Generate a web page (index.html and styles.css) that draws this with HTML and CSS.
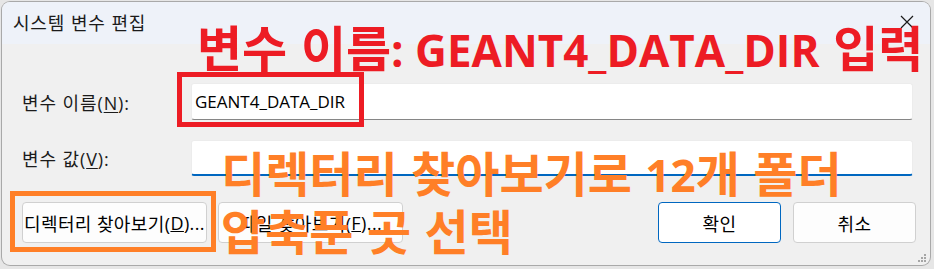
FILE: index.html
```html
<!DOCTYPE html>
<html lang="ko">
<head>
<meta charset="utf-8">
<title>시스템 변수 편집</title>
<link rel="stylesheet" href="styles.css">
</head>
<body>
<div class="dialog">
  <div class="titlebar">
    <span class="title">시스템 변수 편집</span>
    <svg class="close" width="14" height="14" viewBox="0 0 14 14"><path d="M1 1 L13 13 M13 1 L1 13" stroke="#1a1a1a" stroke-width="1.2" fill="none"/></svg>
  </div>
  <div class="content">
    <div class="form">
      <label class="label">변수 이름(<u>N</u>):</label>
      <div class="input">GEANT4_DATA_DIR</div>
      <label class="label">변수 값(<u>V</u>):</label>
      <div class="input focused"></div>
    </div>
    <div class="buttons">
      <div class="group">
        <div class="btn wide">디렉터리 찾아보기(<u>D</u>)...</div>
        <div class="btn wide">파일 찾아보기(<u>F</u>)...</div>
      </div>
      <div class="group group-right">
        <div class="btn ok">확인</div>
        <div class="btn">취소</div>
      </div>
    </div>
  </div>
  <svg class="grip" width="9" height="9" viewBox="0 0 9 9" fill="#a6a6a6"><rect x="6" y="0" width="2" height="2"/><rect x="3" y="3" width="2" height="2"/><rect x="6" y="3" width="2" height="2"/><rect x="0" y="6" width="2" height="2"/><rect x="3" y="6" width="2" height="2"/><rect x="6" y="6" width="2" height="2"/></svg>
  <div class="note note-red">변수 이름<span class="lat">: GEANT4_DATA_DIR</span> 입력</div>
  <div class="box box-red"></div>
  <div class="note note-orange">디렉터리 찾아보기로 <span class="lat">12</span>개 폴더<br>압축푼 곳 선택</div>
  <div class="box box-orange"></div>
</div>
</body>
</html>
```

FILE: styles.css
```css
* { box-sizing: border-box; }
html, body { margin: 0; padding: 0; }
body {
  width: 934px;
  height: 269px;
  background: #e6e6e6;
  overflow: hidden;
  font-family: "Open Sans", "Noto Sans CJK KR", sans-serif;
  font-size: 18px;
  color: #1b1b1b;
}
.dialog {
  position: relative;
  margin: 2px 0 0 2px;
  width: 928px;
  height: 263px;
  background: #f0f0f0;
  border-radius: 8px;
  box-shadow: 0 0 0 1px #a9a9a9;
  overflow: hidden;
}
.titlebar {
  height: 42px;
  background: #eef2f9;
  display: flex;
  align-items: center;
  justify-content: space-between;
  padding: 0 16px 2px 11px;
}
.title { font-family: "Noto Sans CJK KR", sans-serif; font-size: 18px; letter-spacing: 0.8px; }
.close { margin-top: 0; }
.content { padding: 39px 14px 0 20px; }
.form {
  display: grid;
  grid-template-columns: 169px 722px;
  row-gap: 20px;
  align-items: center;
}
.label { font-size: 18px; letter-spacing: 0.9px; }
.label u { text-underline-offset: 2px; }
.input {
  height: 37px;
  background: #fff;
  border: 1px solid #ececec;
  border-bottom-color: #868686;
  border-radius: 3px;
  padding: 0 3px;
  display: flex;
  align-items: center;
  font-size: 17px;
  color: #000;
}
.input.focused {
  height: 36px;
  border-bottom: 2px solid #0067c0;
}
.buttons {
  margin-top: 26px;
  display: flex;
  justify-content: space-between;
}
.group { display: flex; gap: 11px; }
.group-right { gap: 12px; }
.btn {
  height: 41px;
  width: 123px;
  background: #fdfdfd;
  border: 1px solid #d0d0d0;
  border-radius: 4px;
  display: flex;
  align-items: center;
  justify-content: center;
  font-size: 18px;
  color: #000;
  white-space: nowrap;
  letter-spacing: 0.4px;
}
.btn.wide { width: 185px; padding: 0; }
.btn.ok { border-color: #0067c0; background: #fff; }
.grip { position: absolute; right: 3px; bottom: 2px; }
.note {
  position: absolute;
  font-family: "Noto Sans CJK KR", sans-serif;
  font-weight: 700;
  white-space: nowrap;
}
.note .lat { font-family: "Open Sans", sans-serif; }
.note-red { color: #ed1c24; left: 195px; top: 19px; font-size: 49px; line-height: 49px; }
.note-red .lat { font-size: 44px; }
.note-orange { color: #ff7f27; left: 219px; top: 142px; font-size: 48px; line-height: 54px; }
.note-orange .lat { font-size: 44px; }
.box { position: absolute; border-style: solid; border-width: 5px; }
.box-red { border-color: #ed1c24; left: 175px; top: 70px; width: 187px; height: 55px; }
.box-orange { border-color: #ff7f27; left: 8px; top: 189px; width: 206px; height: 61px; }
```
